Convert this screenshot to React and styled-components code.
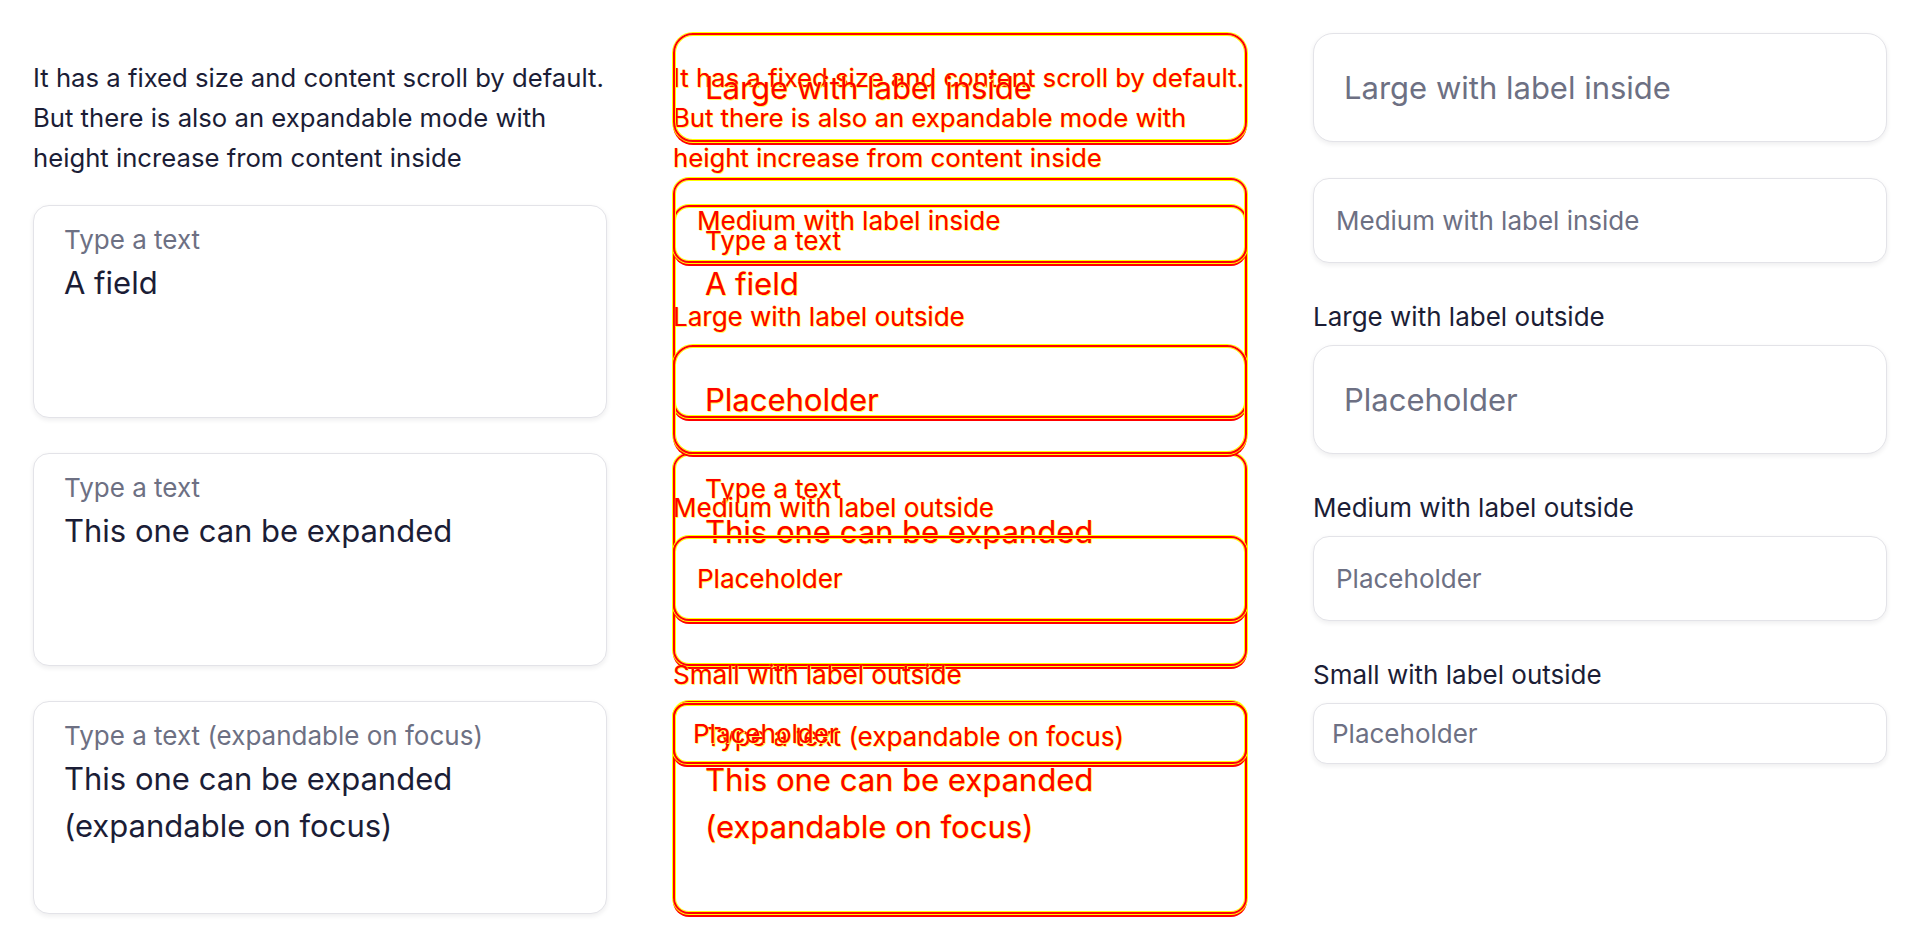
import React from 'react';
import styled, { createGlobalStyle, ThemeProvider } from 'styled-components';

const plain = {
  text: '#1b1d36',
  muted: '#6d7083',
  fieldBg: '#ffffff',
  border: '1px solid #e3e3e8',
  fieldShadow: '0 2px 5px rgba(20, 20, 40, 0.08)',
  glyphShadow: 'none',
};

// the middle panel shows both columns stacked, as red outlines
const diff = {
  text: '#ff0000',
  muted: '#ff0000',
  fieldBg: 'transparent',
  border: '2px solid #ff0000',
  fieldShadow: '0 0 0 1px #ffff00, inset 0 0 0 1px #ffff00, 0 3px 0 0 #ff0000',
  glyphShadow: '0 0 1px #ffff00, 1px 1px 0 #ffff66',
};

const sizes = {
  large: { h: 109, pad: 30, font: 31, radius: 20 },
  medium: { h: 85, pad: 22, font: 26, radius: 16 },
  small: { h: 61, pad: 18, font: 26, radius: 14 },
};

const GlobalStyle = createGlobalStyle`
  * { box-sizing: border-box; }
  body {
    margin: 0;
    background: #ffffff;
    font-family: Inter, "Noto Sans", sans-serif;
  }
`;

const Page = styled.div`
  display: grid;
  grid-template-columns: repeat(3, 640px);
  align-items: start;
`;

const Card = styled.div`
  padding: 33px;
  background: #ffffff;
  border-radius: 0 0 20px 20px;
`;

const Stack = styled(Card)`
  display: grid;
  & > * {
    grid-area: 1 / 1;
  }
`;

const Column = styled.div`
  display: flex;
  flex-direction: column;
  gap: ${({ $gap }) => $gap}px;
`;

const Description = styled.p`
  margin: 25px 0 -8px;
  font-size: 25.7px;
  line-height: 40px;
  color: ${({ theme }) => theme.text};
  text-shadow: ${({ theme }) => theme.glyphShadow};
  white-space: nowrap;
`;

const Area = styled.div`
  height: 213px;
  padding: 15px 30px;
  border: ${({ theme }) => theme.border};
  border-radius: 16px;
  background: ${({ theme }) => theme.fieldBg};
  box-shadow: ${({ theme }) => theme.fieldShadow};
  display: flex;
  flex-direction: column;
`;

const AreaLabel = styled.span`
  font-size: 26px;
  line-height: 38px;
  color: ${({ theme }) => theme.muted};
  text-shadow: ${({ theme }) => theme.glyphShadow};
`;

const AreaValue = styled.span`
  font-size: 31px;
  line-height: 47px;
  color: ${({ theme }) => theme.text};
  text-shadow: ${({ theme }) => theme.glyphShadow};
`;

const Field = styled.div`
  height: ${({ $size }) => sizes[$size].h}px;
  padding: 0 ${({ $size }) => sizes[$size].pad}px;
  border: ${({ theme }) => theme.border};
  border-radius: ${({ $size }) => sizes[$size].radius}px;
  background: ${({ theme }) => theme.fieldBg};
  box-shadow: ${({ theme }) => theme.fieldShadow};
  display: flex;
  align-items: center;
  font-size: ${({ $size }) => sizes[$size].font}px;
  color: ${({ theme }) => theme.muted};
  text-shadow: ${({ theme }) => theme.glyphShadow};
`;

const Group = styled.div`
  display: flex;
  flex-direction: column;
  gap: 10px;
`;

const OutsideLabel = styled.label`
  font-size: 26px;
  line-height: 36px;
  color: ${({ theme }) => theme.text};
  text-shadow: ${({ theme }) => theme.glyphShadow};
`;

const TextAreaField = ({ label, children }) => (
  <Area>
    <AreaLabel>{label}</AreaLabel>
    <AreaValue>{children}</AreaValue>
  </Area>
);

const LabelledField = ({ label, size }) => (
  <Group>
    <OutsideLabel>{label}</OutsideLabel>
    <Field $size={size}>Placeholder</Field>
  </Group>
);

const TextAreas = () => (
  <Column $gap={35}>
    <Description>
      It has a fixed size and content scroll by default.
      <br />
      But there is also an expandable mode with
      <br />
      height increase from content inside
    </Description>
    <TextAreaField label="Type a text">A field</TextAreaField>
    <TextAreaField label="Type a text">This one can be expanded</TextAreaField>
    <TextAreaField label="Type a text (expandable on focus)">
      This one can be expanded (expandable on focus)
    </TextAreaField>
  </Column>
);

const Inputs = () => (
  <Column $gap={36}>
    <Field $size="large">Large with label inside</Field>
    <Field $size="medium">Medium with label inside</Field>
    <LabelledField label="Large with label outside" size="large" />
    <LabelledField label="Medium with label outside" size="medium" />
    <LabelledField label="Small with label outside" size="small" />
  </Column>
);

const App = () => (
  <ThemeProvider theme={plain}>
    <GlobalStyle />
    <Page>
      <Card>
        <TextAreas />
      </Card>
      <ThemeProvider theme={diff}>
        <Stack>
          <TextAreas />
          <Inputs />
        </Stack>
      </ThemeProvider>
      <Card>
        <Inputs />
      </Card>
    </Page>
  </ThemeProvider>
);

export default App;
